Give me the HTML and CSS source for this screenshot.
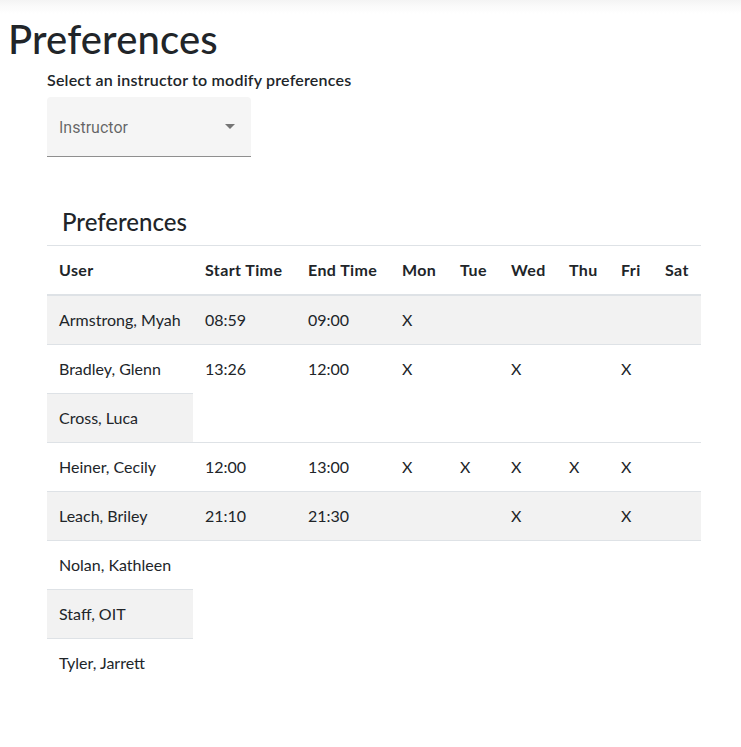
FILE: index.html
```html
<!DOCTYPE html>
<html lang="en">
<head>
<meta charset="utf-8">
<title>Preferences</title>
<link rel="stylesheet" href="styles.css">
</head>
<body>
<div class="page">
  <h1 class="title">Preferences</h1>
  <div class="content">
    <div class="select-label">Select an instructor to modify preferences</div>
    <div class="select">
      <span class="select-text">Instructor</span>
      <svg class="select-arrow" width="10" height="5" viewBox="0 0 10 5"><path d="M0 0l5 5 5-5z" fill="#757575"/></svg>
    </div>
    <table class="table">
      <caption class="table-caption">Preferences</caption>
      <colgroup>
        <col class="c-user"><col class="c-start"><col class="c-end"><col class="c-mon"><col class="c-tue"><col class="c-wed"><col class="c-thu"><col class="c-fri"><col class="c-sat">
      </colgroup>
      <thead>
        <tr><th>User</th><th>Start Time</th><th>End Time</th><th>Mon</th><th>Tue</th><th>Wed</th><th>Thu</th><th>Fri</th><th>Sat</th></tr>
      </thead>
      <tbody>
        <tr><td>Armstrong, Myah</td><td>08:59</td><td>09:00</td><td>X</td><td></td><td></td><td></td><td></td><td></td></tr>
        <tr><td>Bradley, Glenn</td><td>13:26</td><td>12:00</td><td>X</td><td></td><td>X</td><td></td><td>X</td><td></td></tr>
        <tr><td>Cross, Luca</td></tr>
        <tr><td>Heiner, Cecily</td><td>12:00</td><td>13:00</td><td>X</td><td>X</td><td>X</td><td>X</td><td>X</td><td></td></tr>
        <tr><td>Leach, Briley</td><td>21:10</td><td>21:30</td><td></td><td></td><td>X</td><td></td><td>X</td><td></td></tr>
        <tr><td>Nolan, Kathleen</td><td></td><td></td><td></td><td></td><td></td><td></td><td></td><td></td></tr>
        <tr><td>Staff, OIT</td></tr>
        <tr><td>Tyler, Jarrett</td></tr>
      </tbody>
    </table>
  </div>
</div>
</body>
</html>
```
FILE: styles.css
```css
html, body {
  margin: 0;
  padding: 0;
}
body {
  font-family: Lato, "Open Sans", sans-serif;
  font-size: 16px;
  line-height: 24px;
  color: #212529;
  background: #fff linear-gradient(to bottom, #f4f4f4 0, #fafafa 6px, #fff 14px) no-repeat;
}
.page {
  padding: 15px 0 40px 8px;
}
.title {
  margin: 0;
  font-size: 40px;
  line-height: 48px;
  font-weight: 500;
  letter-spacing: 0.15px;
}
.content {
  padding-left: 39px;
  display: flex;
  flex-direction: column;
  align-items: flex-start;
}
.select-label {
  margin-top: 5px;
  font-size: 16px;
  line-height: 24px;
  font-weight: 600;
  letter-spacing: 0.2px;
}
.select {
  margin-top: 5px;
  width: 204px;
  height: 59px;
  box-sizing: content-box;
  background: #f5f5f5;
  border-bottom: 1px solid #8f8f8f;
  border-radius: 4px 4px 0 0;
  display: flex;
  align-items: center;
}
.select-text {
  flex: 1;
  padding: 2px 0 0 12px;
  font-family: Roboto, sans-serif;
  font-size: 16px;
  line-height: 24px;
  color: rgba(0, 0, 0, 0.6);
}
.select-arrow {
  display: block;
  margin-right: 16px;
}
.table {
  margin-top: 51px;
  width: 654px;
  table-layout: fixed;
  border-collapse: collapse;
}
.table-caption {
  caption-side: top;
  text-align: left;
  padding: 0 0 8px 15px;
  font-size: 24px;
  line-height: 28.8px;
  font-weight: 500;
}
.c-user { width: 146px; }
.c-start { width: 103px; }
.c-end { width: 94px; }
.c-mon { width: 58px; }
.c-tue { width: 51px; }
.c-wed { width: 58px; }
.c-thu { width: 52px; }
.c-fri { width: 44px; }
.c-sat { width: 48px; }
.table th,
.table td {
  padding: 12px;
  text-align: left;
  vertical-align: top;
  border-top: 1px solid #dee2e6;
  white-space: nowrap;
}
.table thead th {
  vertical-align: bottom;
  font-weight: 700;
  letter-spacing: 0.4px;
  border-bottom: 2px solid #dee2e6;
}
.table tbody tr:nth-of-type(odd) > td {
  background: #f2f2f2;
}
```
